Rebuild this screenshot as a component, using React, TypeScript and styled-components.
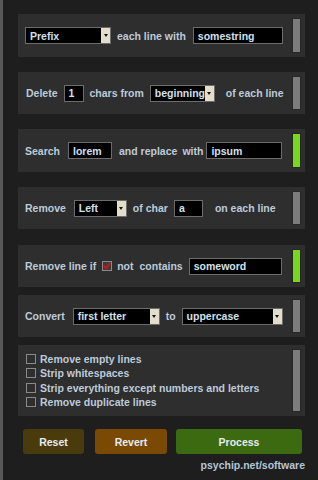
import React from 'react'
import styled, { createGlobalStyle } from 'styled-components'

const GlobalStyle = createGlobalStyle`
  html, body {
    margin: 0;
    padding: 0;
    background: #1e1e1e;
  }
  body {
    font-family: "Liberation Sans", Arial, sans-serif;
    font-size: 10.5px;
    font-weight: bold;
  }
`

const Window = styled.div`
  width: 318px;
  height: 480px;
  box-sizing: border-box;
  border-left: 3px solid #585858;
  background: #1e1e1e;
  padding: 14px 13px 0 15px;
  display: flex;
  flex-direction: column;
`

const Panel = styled.div<{ $h: number; $mb: number }>`
  height: ${props => props.$h}px;
  margin-bottom: ${props => props.$mb}px;
  background: #2e2e2e;
  display: flex;
  align-items: center;
  padding: 0 5px 0 7px;
  gap: 6px;
  flex-shrink: 0;
`

const Label = styled.span<{ $ml?: number }>`
  color: #bccbda;
  white-space: nowrap;
  margin-left: ${props => props.$ml || 0}px;
`

const Indicator = styled.div<{ $on?: boolean }>`
  margin-left: auto;
  align-self: stretch;
  margin-top: 5px;
  margin-bottom: 5px;
  width: 7px;
  flex-shrink: 0;
  background: ${props => (props.$on ? '#78d81c' : '#7c7c7c')};
  box-shadow: 0 0 0 1px #272727;
`

const Field = styled.div<{ $w: number; $ml?: number }>`
  width: ${props => props.$w}px;
  margin-left: ${props => props.$ml || 0}px;
  height: 17px;
  box-sizing: border-box;
  background: #000;
  border: 1px solid #6c6c6c;
  color: #d2e0ee;
  padding-left: 4px;
  display: flex;
  align-items: center;
  flex-shrink: 0;
  white-space: nowrap;
  overflow: hidden;
`

const SelectBox = styled(Field)`
  padding-left: 0;
`

const SelectText = styled.span`
  flex: 1;
  padding-left: 4px;
  overflow: hidden;
`

const Arrow = styled.span`
  width: 9px;
  flex-shrink: 0;
  align-self: stretch;
  background: #e2decb;
  display: flex;
  align-items: center;
  justify-content: center;
  &::after {
    content: '';
    border-left: 2.5px solid transparent;
    border-right: 2.5px solid transparent;
    border-top: 3px solid #111;
  }
`

const Box = styled.span<{ $checked?: boolean }>`
  width: 10px;
  height: 10px;
  box-sizing: border-box;
  border: 1px solid #8a8a8a;
  background: ${props => (props.$checked ? '#3c3c3c' : '#2e2e2e')};
  display: inline-flex;
  align-items: center;
  justify-content: center;
  flex-shrink: 0;
`

const ListPanel = styled(Panel)`
  align-items: stretch;
`

const List = styled.div`
  display: flex;
  flex-direction: column;
  justify-content: center;
  padding-left: 1px;
`

const ListItem = styled.label`
  display: flex;
  align-items: center;
  gap: 4px;
  height: 14.5px;
  color: #bccbda;
  white-space: nowrap;
`

const Buttons = styled.div`
  display: flex;
  padding-left: 5px;
  height: 25px;
  flex-shrink: 0;
`

const Button = styled.div<{ $bg: string; $w: number; $ml?: number }>`
  width: ${props => props.$w}px;
  margin-left: ${props => props.$ml || 0}px;
  background: ${props => props.$bg};
  border-radius: 3px;
  color: #e6ecf0;
  display: flex;
  align-items: center;
  justify-content: center;
`

const Footer = styled.div`
  text-align: right;
  color: #b4c6d8;
  margin-top: 4px;
  line-height: 14px;
`

const Select = ({ w, ml, children }: { w: number; ml?: number; children: React.ReactNode }) => (
  <SelectBox $w={w} $ml={ml}>
    <SelectText>{children}</SelectText>
    <Arrow />
  </SelectBox>
)

const Check = () => (
  <svg width='8' height='8' viewBox='0 0 8 8'>
    <path d='M1 3.5 L3.2 6.2 L7 1' stroke='#e01010' strokeWidth='1.8' fill='none' />
  </svg>
)

const options = [
  'Remove empty lines',
  'Strip whitespaces',
  'Strip everything except numbers and letters',
  'Remove duplicate lines'
]

const App: React.FC = () => (
  <Window>
    <GlobalStyle />
    <Panel $h={43} $mb={15}>
      <Select w={86}>Prefix</Select>
      <Label>each line with</Label>
      <Field $w={90} $ml={1}>somestring</Field>
      <Indicator />
    </Panel>
    <Panel $h={42} $mb={15}>
      <Label $ml={1}>Delete</Label>
      <Field $w={20}>1</Field>
      <Label>chars from</Label>
      <Select w={65}>beginning</Select>
      <Label $ml={5}>of each line</Label>
      <Indicator />
    </Panel>
    <Panel $h={43} $mb={15}>
      <Label>Search</Label>
      <Field $w={44} $ml={2}>lorem</Field>
      <Label $ml={1}>and replace</Label>
      <Label $ml={-1}>with</Label>
      <Field $w={76} $ml={-3}>ipsum</Field>
      <Indicator $on />
    </Panel>
    <Panel $h={42} $mb={16}>
      <Label>Remove</Label>
      <Select w={53} ml={2}>Left</Select>
      <Label>of char</Label>
      <Field $w={29}>a</Field>
      <Label $ml={6}>on each line</Label>
      <Indicator />
    </Panel>
    <Panel $h={42} $mb={8}>
      <Label>Remove line if</Label>
      <Box $checked>
        <Check />
      </Box>
      <Label $ml={-1}>not</Label>
      <Label>contains</Label>
      <Field $w={93}>someword</Field>
      <Indicator $on />
    </Panel>
    <Panel $h={42} $mb={8}>
      <Label>Convert</Label>
      <Select w={87} ml={2}>first letter</Select>
      <Label>to</Label>
      <Select w={101}>uppercase</Select>
      <Indicator />
    </Panel>
    <ListPanel $h={71} $mb={13}>
      <List>
        {options.map(o => (
          <ListItem key={o}>
            <Box />
            {o}
          </ListItem>
        ))}
      </List>
      <Indicator />
    </ListPanel>
    <Buttons>
      <Button $bg='#4a3b0c' $w={61}>Reset</Button>
      <Button $bg='#7a4a04' $w={72} $ml={11}>Revert</Button>
      <Button $bg='#3c6a10' $w={126} $ml={9}>Process</Button>
    </Buttons>
    <Footer>psychip.net/software</Footer>
  </Window>
)

export default App
